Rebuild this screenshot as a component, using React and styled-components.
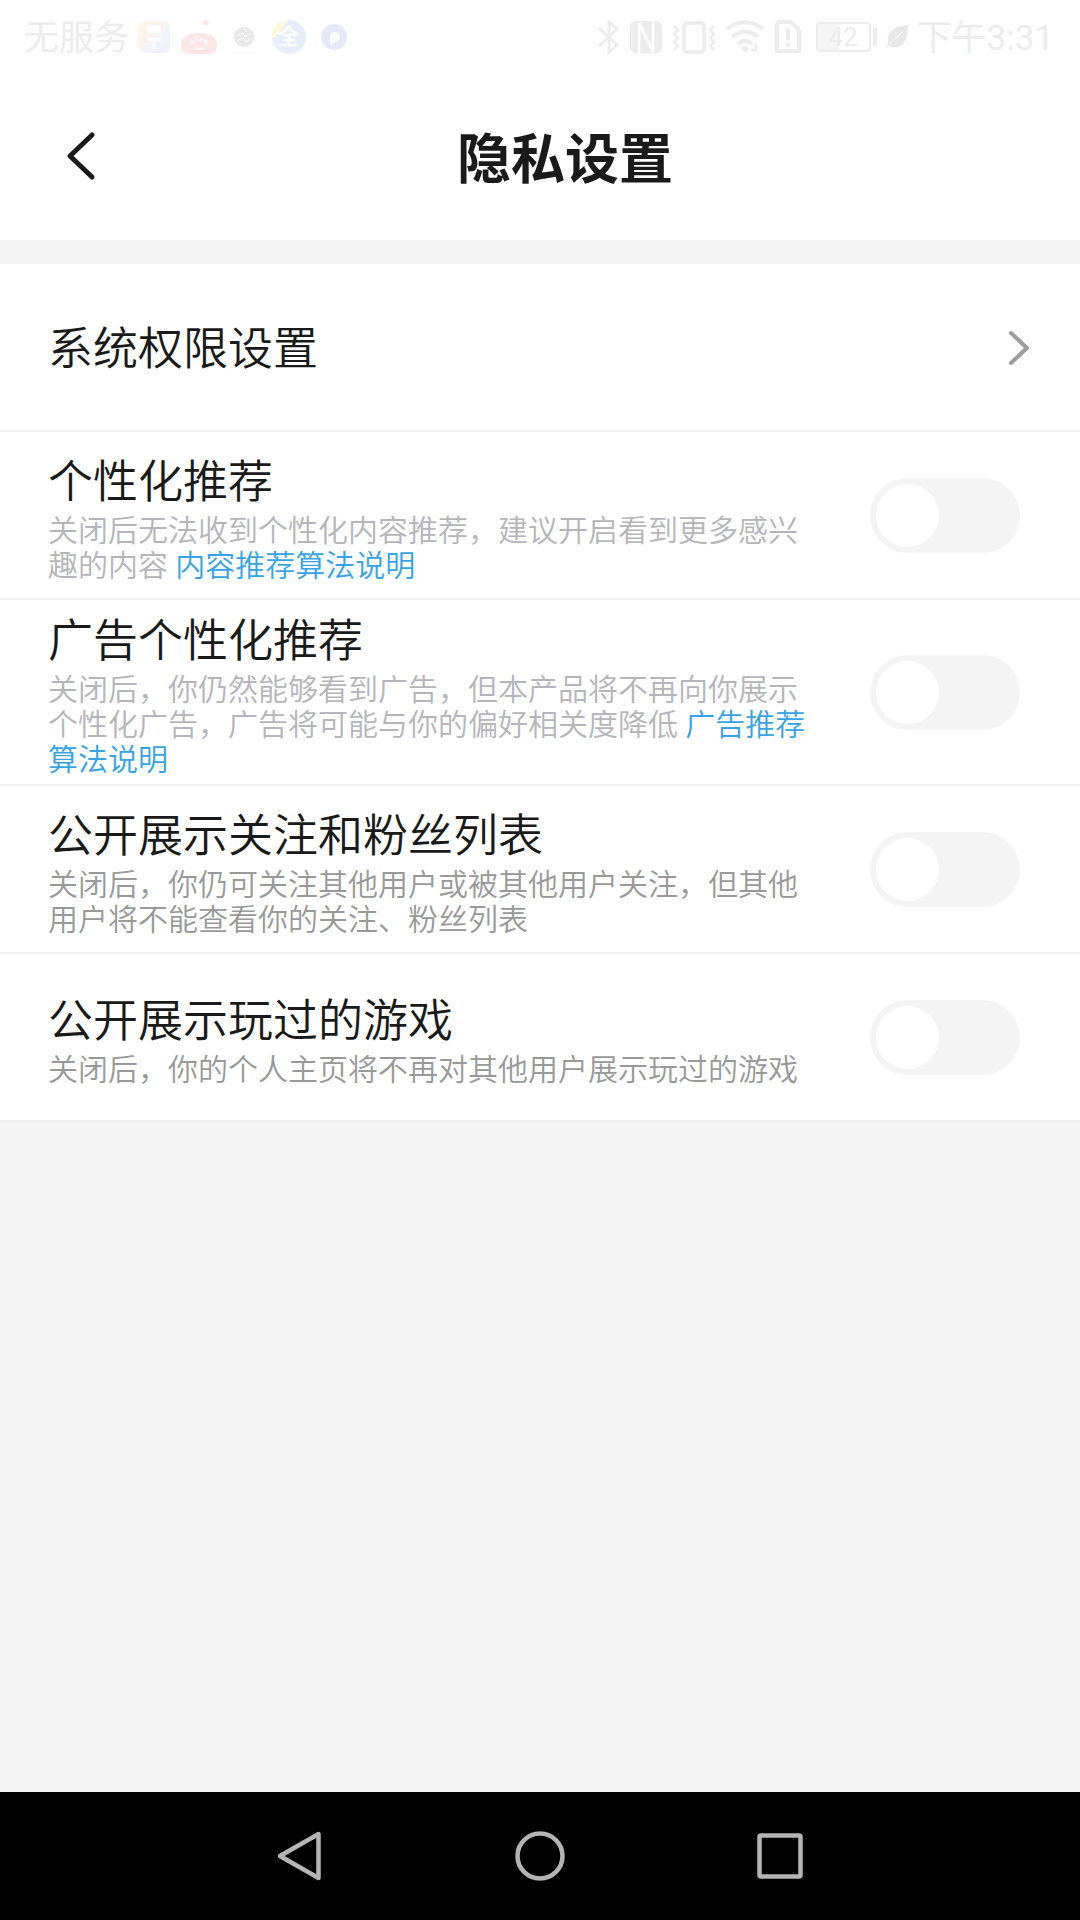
import { useState } from 'react';
import styled, { createGlobalStyle } from 'styled-components';

const settings = [
  {
    id: 'recommend',
    title: '个性化推荐',
    text: '关闭后无法收到个性化内容推荐，建议开启看到更多感兴趣的内容',
    link: '内容推荐算法说明',
    color: '#b5b5bb',
  },
  {
    id: 'ads',
    title: '广告个性化推荐',
    text: '关闭后，你仍然能够看到广告，但本产品将不再向你展示个性化广告，广告将可能与你的偏好相关度降低',
    link: '广告推荐算法说明',
    color: '#b5b5bb',
  },
  {
    id: 'follows',
    title: '公开展示关注和粉丝列表',
    text: '关闭后，你仍可关注其他用户或被其他用户关注，但其他用户将不能查看你的关注、粉丝列表',
    color: '#999',
  },
  {
    id: 'games',
    title: '公开展示玩过的游戏',
    text: '关闭后，你的个人主页将不再对其他用户展示玩过的游戏',
    color: '#999',
  },
];

const App = () => {
  const [enabled, setEnabled] = useState({});
  const toggle = (id) => setEnabled({ ...enabled, [id]: !enabled[id] });

  return (
    <Page lang="zh-CN">
      <GlobalStyle />
      <StatusBar />
      <Header>
        <BackButton type="button" aria-label="返回">
          <svg width="30" height="50" viewBox="0 0 30 50" fill="none" stroke="#1a1a1a" strokeWidth="5" strokeLinecap="round" strokeLinejoin="round">
            <path d="M26 4 4 25l22 21" />
          </svg>
        </BackButton>
        <Title>隐私设置</Title>
      </Header>

      <List>
        <RowLink href="#permissions">
          <RowTitle>系统权限设置</RowTitle>
          <svg width="24" height="40" viewBox="0 0 24 40" fill="none" stroke="#9c9c9c" strokeWidth="4" strokeLinecap="round" strokeLinejoin="round">
            <path d="M5 5l16 15L5 35" />
          </svg>
        </RowLink>
        {settings.map(item => (
          <Row key={item.id}>
            <RowText>
              <RowTitle as="label" htmlFor={item.id}>{item.title}</RowTitle>
              <Description $color={item.color}>
                {item.text}
                {item.link && <>{' '}<a href={`#${item.id}`}>{item.link}</a></>}
              </Description>
            </RowText>
            <Toggle
              id={item.id}
              type="checkbox"
              checked={!!enabled[item.id]}
              onChange={() => toggle(item.id)}
            />
          </Row>
        ))}
      </List>

      <NavBar>
        <NavButton type="button" aria-label="后退">
          <svg {...navIcon}><path d="M48.500 8v44L10 30z" /></svg>
        </NavButton>
        <NavButton type="button" aria-label="主页">
          <svg {...navIcon}><circle cx="30" cy="30" r="22.500" /></svg>
        </NavButton>
        <NavButton type="button" aria-label="最近任务">
          <svg {...navIcon}><rect x="9.500" y="9.500" width="41" height="41" rx="1.500" /></svg>
        </NavButton>
      </NavBar>
    </Page>
  );
}

const navIcon = {
  width: 60,
  height: 60,
  viewBox: '0 0 60 60',
  fill: 'none',
  stroke: '#b4b4b4',
  strokeWidth: 4.5,
  strokeLinejoin: 'round',
};

const StatusBar = () => (
  <Status>
    <StatusGroup>
      <StatusText>无服务</StatusText>
      <Apps>
        {/* payment app */}
        <svg width="34" height="36" viewBox="0 0 34 36">
          <defs>
            <linearGradient id="pay" x1="0" y1="0" x2="1" y2="1">
              <stop offset="0" stopColor="#fffae6" />
              <stop offset="0.45" stopColor="#fdf1ec" />
              <stop offset="0.6" stopColor="#eef5fd" />
              <stop offset="1" stopColor="#f4ecfa" />
            </linearGradient>
          </defs>
          <rect x="1" y="2" width="32" height="32" rx="7" fill="url(#pay)" />
          <path d="M12 8h10v5H12zM10 20h14M17 20v10" fill="#fff" stroke="#fff" strokeWidth="3" />
        </svg>
        {/* red mascot */}
        <svg width="38" height="36" viewBox="0 0 38 36">
          <path d="M1 26c0-9 8-12 18-12s18 3 18 12c0 6-3 9-8 9H9c-5 0-8-3-8-9z" fill="#fce6e6" />
          <path d="M23 1l6 1-1 5-5-1z" fill="#fce6e6" />
          <path d="M10 21l4 2-4 2M28 21l-4 2 4 2M14 29c3 1 7 1 10 0M16 19l2 3M22 19l-2 3" fill="none" stroke="#fff" strokeWidth="1.500" />
        </svg>
        {/* round badge */}
        <svg width="26" height="36" viewBox="0 0 26 36">
          <circle cx="13" cy="18" r="10" fill="#e8e8e8" />
          <path d="M5 17l7-3 2 4 6-4M6 22l6-3 3 4 6-4M13 9l3 4" fill="none" stroke="#fff" />
          <path d="M1 34h24" stroke="#fafafa" strokeWidth="2" />
        </svg>
        <Globe>
          <svg width="36" height="36" viewBox="0 0 36 36">
            <circle cx="18" cy="18" r="17" fill="#e5eefa" />
            <path d="M1 19A17 17 0 0 1 18 1L4 18z" fill="#fdf9dc" />
          </svg>
          <b>全</b>
        </Globe>
        {/* blue ring */}
        <svg width="28" height="36" viewBox="0 0 28 36">
          <circle cx="14" cy="18" r="13" fill="#e6e9fb" />
          <path d="M11 24v-6a4 4 0 1 1 4 4z" fill="#fff" stroke="#fff" strokeWidth="2" />
        </svg>
      </Apps>
    </StatusGroup>
    <StatusGroup>
      <Indicators>
        {/* bluetooth */}
        <svg width="22" height="36" viewBox="0 0 22 36" fill="none" stroke="#ececec" strokeWidth="3">
          <path d="M1 9l18 17-8 7V3l8 7L1 27" />
        </svg>
        {/* nfc */}
        <svg width="34" height="36" viewBox="0 0 34 36">
          <rect x="1" y="2" width="32" height="32" rx="6" fill="#ececec" />
          <path d="M10 34V4l14 29V2" fill="none" stroke="#fff" strokeWidth="2.500" />
        </svg>
        {/* vibrate */}
        <svg width="44" height="36" viewBox="0 0 44 36" fill="none" stroke="#ececec" strokeWidth="3.500">
          <rect x="12" y="4" width="20" height="29" rx="3" />
          <path d="M2 7l4 4-4 4 4 4-4 4 4 4-4 4M42 7l-4 4 4 4-4 4 4 4-4 4 4 4" strokeWidth="2.500" />
        </svg>
        {/* wifi */}
        <svg width="40" height="36" viewBox="0 0 40 36" fill="none" stroke="#ececec" strokeWidth="4">
          <path d="M2 10c11-9 25-9 36 0M7 18c8-7 18-7 26 0M13 25c4-4 10-4 14 0" />
          <circle cx="20" cy="30" r="3" fill="#ececec" stroke="none" />
          <path d="M26 31h5v-6M31 25v8" strokeWidth="2" />
        </svg>
        {/* sim card */}
        <svg width="28" height="36" viewBox="0 0 28 36" fill="none" stroke="#ececec" strokeWidth="4">
          <path d="M3 32V5l2-2h12l8 8v21z" />
          <path d="M14 10v11M14 24v4" />
        </svg>
      </Indicators>
      <Battery><span>42</span></Battery>
      {/* power saving leaf */}
      <svg width="24" height="36" viewBox="0 0 24 36" fill="#e8e8e8">
        <path d="M23 6c0 17-7 26-19 21l-3 2 2-5C1 14 8 7 23 6z" />
        <path d="M4 25C9 20 14 18 18 12" stroke="#fff" fill="none" />
      </svg>
      <StatusText>下午3:31</StatusText>
    </StatusGroup>
  </Status>
);

const GlobalStyle = createGlobalStyle`
  body {
    margin: 0;
    background: #f4f4f4;
  }

  button {
    border: 0;
    padding: 0;
    background: none;
    cursor: pointer;
  }

  svg {
    display: block;
    flex: none;
  }
`

const Page = styled.div`
  font-family: Roboto, 'Noto Sans CJK SC', sans-serif;
  font-weight: 350;
  display: flex;
  flex-direction: column;
  min-height: 100vh;
  color: #1a1a1a;
  background: #f4f4f4;
`

const Status = styled.div`
  display: flex;
  justify-content: space-between;
  align-items: center;
  box-sizing: border-box;
  height: 72px;
  padding: 2px 26px 0 24px;
  background: #fff;
  color: #ececec;
  white-space: nowrap;
`

const StatusGroup = styled.div`
  display: flex;
  align-items: center;
  gap: 8px;
`

const StatusText = styled.span`
  padding-top: 4px;
  font-size: 35px;
  line-height: 40px;
  font-weight: 400;
`

const Apps = styled.div`
  display: grid;
  grid-template-columns: repeat(5, 45px);
  justify-items: center;
  margin-left: -6px;
`

const Indicators = styled.div`
  display: flex;
  align-items: center;
  gap: 9px;
`

const Globe = styled.span`
  display: grid;
  place-items: center;

  > * {
    grid-area: 1 / 1;
  }

  b {
    color: #fff;
    font-size: 22px;
    line-height: 36px;
    font-weight: 700;
  }
`

const Battery = styled.div`
  display: flex;
  align-items: center;
  margin-left: 6px;

  span {
    box-sizing: border-box;
    width: 55px;
    height: 30px;
    border: 2px solid #ececec;
    border-radius: 4px;
    background: linear-gradient(90deg, #f5f5f5 42%, #fff 42%);
    font-size: 26px;
    line-height: 27px;
    font-weight: 400;
    text-align: center;
  }

  &::after {
    content: '';
    width: 4px;
    height: 18px;
    margin-left: 2px;
    background: #ececec;
  }
`

const Header = styled.header`
  display: flex;
  align-items: center;
  height: 168px;
  padding: 0 46px 0 66px;
  background: #fff;
`

const BackButton = styled.button`
  flex: none;
`

const Title = styled.h1`
  flex: 1;
  margin: 0;
  padding-top: 10px;
  font-size: 54px;
  line-height: 64px;
  font-weight: 700;
  text-align: center;
`

const List = styled.main`
  flex: 1;
  margin-top: 24px;
`

const Row = styled.div`
  display: flex;
  align-items: center;
  justify-content: space-between;
  gap: 54px;
  box-sizing: border-box;
  min-height: 168px;
  padding: 8px 60px 7px 48px;
  border-bottom: 2px solid #eee;
  background: #fff;
`

const RowLink = styled(Row).attrs({ as: 'a' })`
  padding-right: 50px;
  color: inherit;
  text-decoration: none;
`

const RowText = styled.div`
  flex: 1;
`

const RowTitle = styled.span`
  display: block;
  padding-top: 4px;
  font-size: 45px;
  line-height: 60px;
`

const Description = styled.p`
  margin: 0;
  color: ${props => props.$color};
  font-size: 30px;
  line-height: 35px;

  a {
    color: #36a3e6;
    text-decoration: none;
  }
`

const Toggle = styled.input`
  appearance: none;
  flex: none;
  display: flex;
  box-sizing: border-box;
  width: 150px;
  height: 75px;
  margin: 0;
  padding: 6px;
  border-radius: 38px;
  background: #f4f4f4;
  cursor: pointer;

  &::before {
    content: '';
    width: 63px;
    height: 63px;
    border-radius: 50%;
    background: #fff;
  }

  &:checked {
    justify-content: flex-end;
    background: #36a3e6;
  }
`

const NavBar = styled.nav`
  display: flex;
  justify-content: center;
  height: 128px;
  background: #000;
`

const NavButton = styled.button`
  display: flex;
  align-items: center;
  justify-content: center;
  width: 240px;
`

export default App;
